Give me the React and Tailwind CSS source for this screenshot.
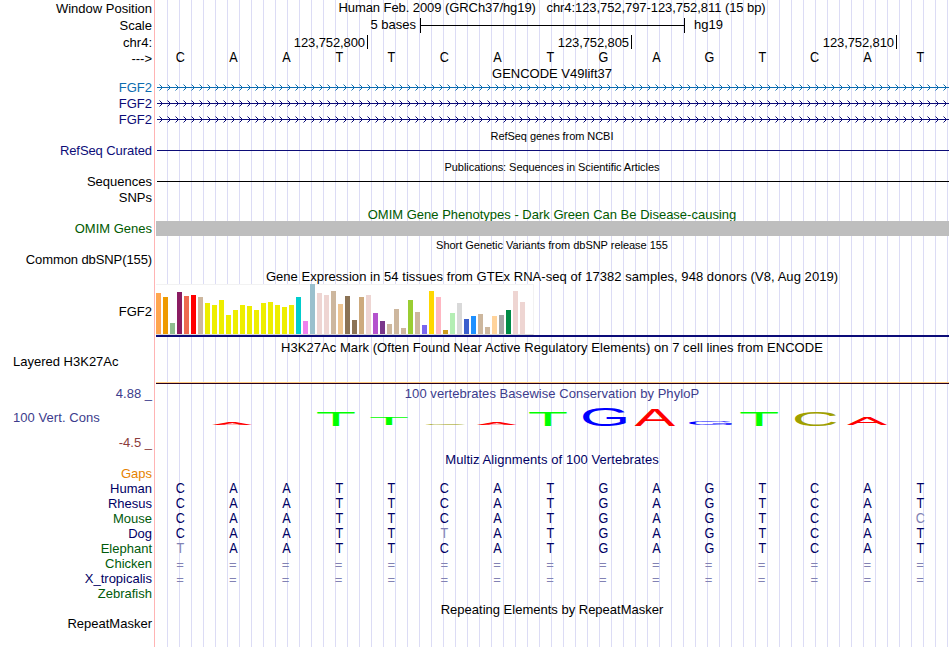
import clsx from "clsx";

const BASES = "CAATTCATGAGTCAT";

const brain = [114, 120, 105, 150, 135, 120, 123, 135, 114, 111, 120, 126, 120];

// tissue colour + bar height in px
const TISSUES = [
  ["#ffa54f", 41], ["#ee9a00", 37], ["#8fbc8f", 11], ["#8b1c62", 42], ["#ee6a50", 38],
  ["#ff0000", 39], ["#cdb79e", 37],
  ...brain.map((t) => ["#eeee00", (207 - t) / 3]),
  ["#00cdcd", 37], ["#ee82ee", 13], ["#9ac0cd", 50], ["#eed5d2", 41], ["#eed5d2", 39],
  ["#cdb79e", 43], ["#eec591", 30], ["#8b7355", 38], ["#8b7355", 14], ["#cdaa7d", 37],
  ["#eed5d2", 39], ["#b452cd", 21], ["#7a378b", 13], ["#cdb79e", 10], ["#cdb79e", 25],
  ["#cdb79e", 6], ["#9acd32", 34], ["#cdb79e", 22], ["#7a67ee", 9], ["#ffd700", 43],
  ["#ffb6c1", 37], ["#cd9b1d", 4], ["#b4eeb4", 21], ["#d9d9d9", 31], ["#3a5fcd", 15],
  ["#1e90ff", 18], ["#cdb79e", 20], ["#cdb79e", 7], ["#ffd39b", 18], ["#a6a6a6", 19],
  ["#008b45", 24], ["#eed5d2", 43], ["#eed5d2", 32],
];

// base, left, right, top, bottom inside the conservation track
const LOGO = [
  ["A", 56, 96, 20.3, 23.2],
  ["T", 161, 198.7, 10, 24],
  ["T", 214.3, 251.7, 16, 23],
  ["C", 269.3, 309, 22, 23],
  ["A", 320.7, 360.7, 20, 23],
  ["T", 373, 410.7, 10, 24],
  ["G", 427, 470, 6, 24],
  ["A", 478.5, 519, 8, 24],
  ["G", 533, 576, 19, 23],
  ["T", 584.3, 622, 10, 24],
  ["C", 639, 680, 10, 24],
  ["A", 691, 731, 15, 23],
];

// glyph box in em: left, right, descent, height
const GLYPHS = {
  A: { box: [0.002, 0.665, 0, 0.688], fill: "#ff0000" },
  C: { box: [0.05, 0.68, 0.01, 0.698], fill: "#a0a000" },
  G: { box: [0.05, 0.71, 0.01, 0.698], fill: "#0000ff" },
  T: { box: [0.02, 0.59, 0, 0.688], fill: "#00ff00" },
};

const ALIGNMENTS = [
  { name: "Human", color: "text-[#000064]", seq: BASES },
  { name: "Rhesus", color: "text-[#000064]", seq: BASES },
  { name: "Mouse", color: "text-[#005a0a]", seq: "CAATTCATGAGTCAC" },
  { name: "Dog", color: "text-[#000064]", seq: "CAATTTATGAGTCAT" },
  { name: "Elephant", color: "text-[#005a0a]", seq: "TAATTCATGAGTCAT" },
  { name: "Chicken", color: "text-[#005a0a]", seq: "===============" },
  { name: "X_tropicalis", color: "text-[#000064]", seq: "===============" },
  { name: "Zebrafish", color: "text-[#005a0a]", seq: "" },
];

function Row({ label, labelClass, className, children }) {
  return (
    <div className={clsx("flex shrink-0", className)}>
      <div
        className={clsx(
          "flex w-[155px] shrink-0 items-center justify-end border-r border-[#ffb4b4] pr-[2px]",
          labelClass
        )}
      >
        {label}
      </div>
      <div className="ml-px flex min-w-0 flex-1 flex-col bg-[linear-gradient(to_right,transparent_11px,#dcdcf5_11px)] bg-[length:12px_100%]">
        {children}
      </div>
    </div>
  );
}

function Title({ className, children }) {
  return (
    <div className={clsx("flex flex-1 items-center justify-center pr-[2px]", className)}>
      {children}
    </div>
  );
}

function Sequence({ seq, className }) {
  return (
    <div className={clsx("-ml-[2px] grid w-[793px] flex-1 grid-cols-15 items-center text-center text-[14px]", className)}>
      {seq.split("").map((b, i) => (
        <span
          key={i}
          className={clsx(b === "=" ? "pt-px pr-px text-[13px]" : "scale-x-[0.9]", b !== BASES[i] && "text-[#8282b4]")}
        >
          {b}
        </span>
      ))}
    </div>
  );
}

function Transcript({ color }) {
  const arrows = Array.from({ length: 99 }, (_, i) => {
    const x = 6.5 + i * 8;
    return `M${x - 3} 4.5L${x} 7.5L${x - 3} 10.5`;
  }).join("");
  return (
    <svg width="793" height="16" className={color} fill="none" stroke="currentColor">
      <path d="M1 7.5H793" />
      <path d={arrows} />
    </svg>
  );
}

function ConservationLogo() {
  return (
    <svg width="793" height="34" fontFamily="Liberation Sans, Arial, sans-serif" fontSize="100">
      {LOGO.map(([b, x0, x1, y0, y1], i) => {
        const { box, fill } = GLYPHS[b];
        const sx = (x1 - x0) / (box[1] - box[0]) / 100;
        const sy = (y1 - y0) / (box[2] + box[3]) / 100;
        const tx = x0 - box[0] * sx * 100;
        const ty = y1 - box[2] * sy * 100;
        return (
          <text key={i} fill={fill} transform={`translate(${tx} ${ty}) scale(${sx} ${sy})`}>
            {b}
          </text>
        );
      })}
    </svg>
  );
}

export default function App() {
  return (
    <div className="flex h-[647px] w-[950px] flex-col overflow-hidden bg-white font-['Liberation_Sans',Arial,sans-serif] text-[13px] leading-[15px] whitespace-nowrap text-black">
      <Row className="h-[17px]" label="Window Position">
        <Title className="pb-[2px] tracking-[-0.07px] whitespace-pre">
          {"Human Feb. 2009 (GRCh37/hg19)   chr4:123,752,797-123,752,811 (15 bp)"}
        </Title>
      </Row>

      <Row className="h-[17px]" label="Scale">
        <div className="flex flex-1 items-center">
          <span className="w-[260px] pb-[2px] text-right">5 bases</span>
          <div className="ml-[4px] flex h-[15px] w-[265px] items-center border-x border-black">
            <div className="h-px w-full bg-black" />
          </div>
          <span className="ml-[9px] pb-[2px]">hg19</span>
        </div>
      </Row>

      <Row className="h-4" label="chr4:">
        <div className="flex h-[15px] items-end pt-px tracking-[-0.1px]">
          <div className="h-[14px] w-[212px] border-r border-black pr-[2px] text-right">123,752,800</div>
          <div className="h-[14px] w-[264px] border-r border-black pr-[2px] text-right">123,752,805</div>
          <div className="h-[14px] w-[265px] border-r border-black pr-[2px] text-right">123,752,810</div>
        </div>
      </Row>

      <Row className="h-4" label="--->">
        <Sequence seq={BASES} className="pb-[4px]" />
      </Row>

      <Row className="h-[14px]">
        <Title>GENCODE V49lift37</Title>
      </Row>
      <Row className="h-4" label="FGF2" labelClass="pb-[2px] text-[#0c6cb0]">
        <Transcript color="text-[#0c6cb0]" />
      </Row>
      <Row className="h-4" label="FGF2" labelClass="pb-[2px] text-[#0c0c78]">
        <Transcript color="text-[#0c0c78]" />
      </Row>
      <Row className="h-4" label="FGF2" labelClass="pb-[2px] text-[#0c0c78]">
        <Transcript color="text-[#0c0c78]" />
      </Row>

      <Row className="h-[15px]">
        <Title className="pt-px text-[11px] tracking-[-0.06px]">RefSeq genes from NCBI</Title>
      </Row>
      <Row className="h-4" label="RefSeq Curated" labelClass="pb-[2px] tracking-[-0.08px] text-[#0c0c78]">
        <div className="mt-[7px] mr-px ml-px h-px bg-[#0c0c78]" />
      </Row>

      <Row className="h-[15px]">
        <Title className="pt-px text-[11px] tracking-[-0.06px]">
          Publications: Sequences in Scientific Articles
        </Title>
      </Row>
      <Row className="h-4" label="Sequences" labelClass="pb-[2px]">
        <div className="mt-[7px] mr-px ml-px h-px bg-black" />
      </Row>
      <Row className="h-4" label="SNPs" labelClass="pb-[2px]" />

      <Row className="h-[15px]">
        <Title className="overflow-hidden pt-[2px] text-[#005a00]">
          OMIM Gene Phenotypes - Dark Green Can Be Disease-causing
        </Title>
      </Row>
      <Row className="h-[15px]" label="OMIM Genes" labelClass="text-[#005a00]">
        <div className="mr-px flex-1 bg-[#bebebe]" />
      </Row>

      <Row className="h-4">
        <Title className="pt-[2px] text-[11px] tracking-[-0.03px]">
          Short Genetic Variants from dbSNP release 155
        </Title>
      </Row>
      <Row className="h-[15px]" label="Common dbSNP(155)" labelClass="tracking-[-0.1px]" />

      <Row className="h-[17px]">
        <Title className="pt-[2px] tracking-[0.055px]">
          Gene Expression in 54 tissues from GTEx RNA-seq of 17382 samples, 948 donors (V8, Aug 2019)
        </Title>
      </Row>
      <Row className="h-[53px]" label="FGF2" labelClass="pt-[2px]">
        <div className="flex h-[51px] w-[378px] items-end gap-[2px] border-t border-r border-b border-t-[#f2f2f2] border-r-[#f2f2f2] border-b-[#d9d9d9] bg-white">
          {TISSUES.map(([color, height], i) => (
            <div key={i} className="w-[5px]" style={{ background: color, height }} />
          ))}
        </div>
        <div className="mr-px h-[2px] bg-[#0c0c78]" />
      </Row>

      <Row className="h-[18px]">
        <Title className="pt-[3px] tracking-[0.05px]">
          H3K27Ac Mark (Often Found Near Active Regulatory Elements) on 7 cell lines from ENCODE
        </Title>
      </Row>
      <Row className="h-[29px]" label={<span className="-mt-px">Layered H3K27Ac</span>} labelClass="justify-start! items-start! pl-[13px]">
        <div className="mt-auto mr-px h-px bg-[#ffc87d]" />
        <div className="mr-px h-px bg-[#28001e]" />
      </Row>

      <Row className="h-[18px]" label="4.88 _" labelClass="text-[#3c3c8c]">
        <Title className="tracking-[0.05px] text-[#3c3c8c]">100 vertebrates Basewise Conservation by PhyloP</Title>
      </Row>
      <Row
        className="h-[34px]"
        label="100 Vert. Cons"
        labelClass="justify-start! pb-[4px] pl-[13px] tracking-[0.06px] text-[#3c3c8c]"
      >
        <ConservationLogo />
      </Row>
      <Row className="h-4" label="-4.5 _" labelClass="pb-[3px] text-[#8c3c3c]" />

      <Row className="h-[15px]">
        <Title className="tracking-[0.07px] text-[#000064]">Multiz Alignments of 100 Vertebrates</Title>
      </Row>
      <Row className="h-[14px]" label="Gaps" labelClass="pb-[2px] text-[#e68200]" />
      {ALIGNMENTS.map(({ name, color, seq }) => (
        <Row key={name} className="h-[15px]" label={name} labelClass={color}>
          <Sequence seq={seq} className="text-[#000064]" />
        </Row>
      ))}

      <Row className="h-4">
        <Title>Repeating Elements by RepeatMasker</Title>
      </Row>
      <Row className="h-[30px]" label={<span className="-mt-px">RepeatMasker</span>} labelClass="items-start!" />
    </div>
  );
}
